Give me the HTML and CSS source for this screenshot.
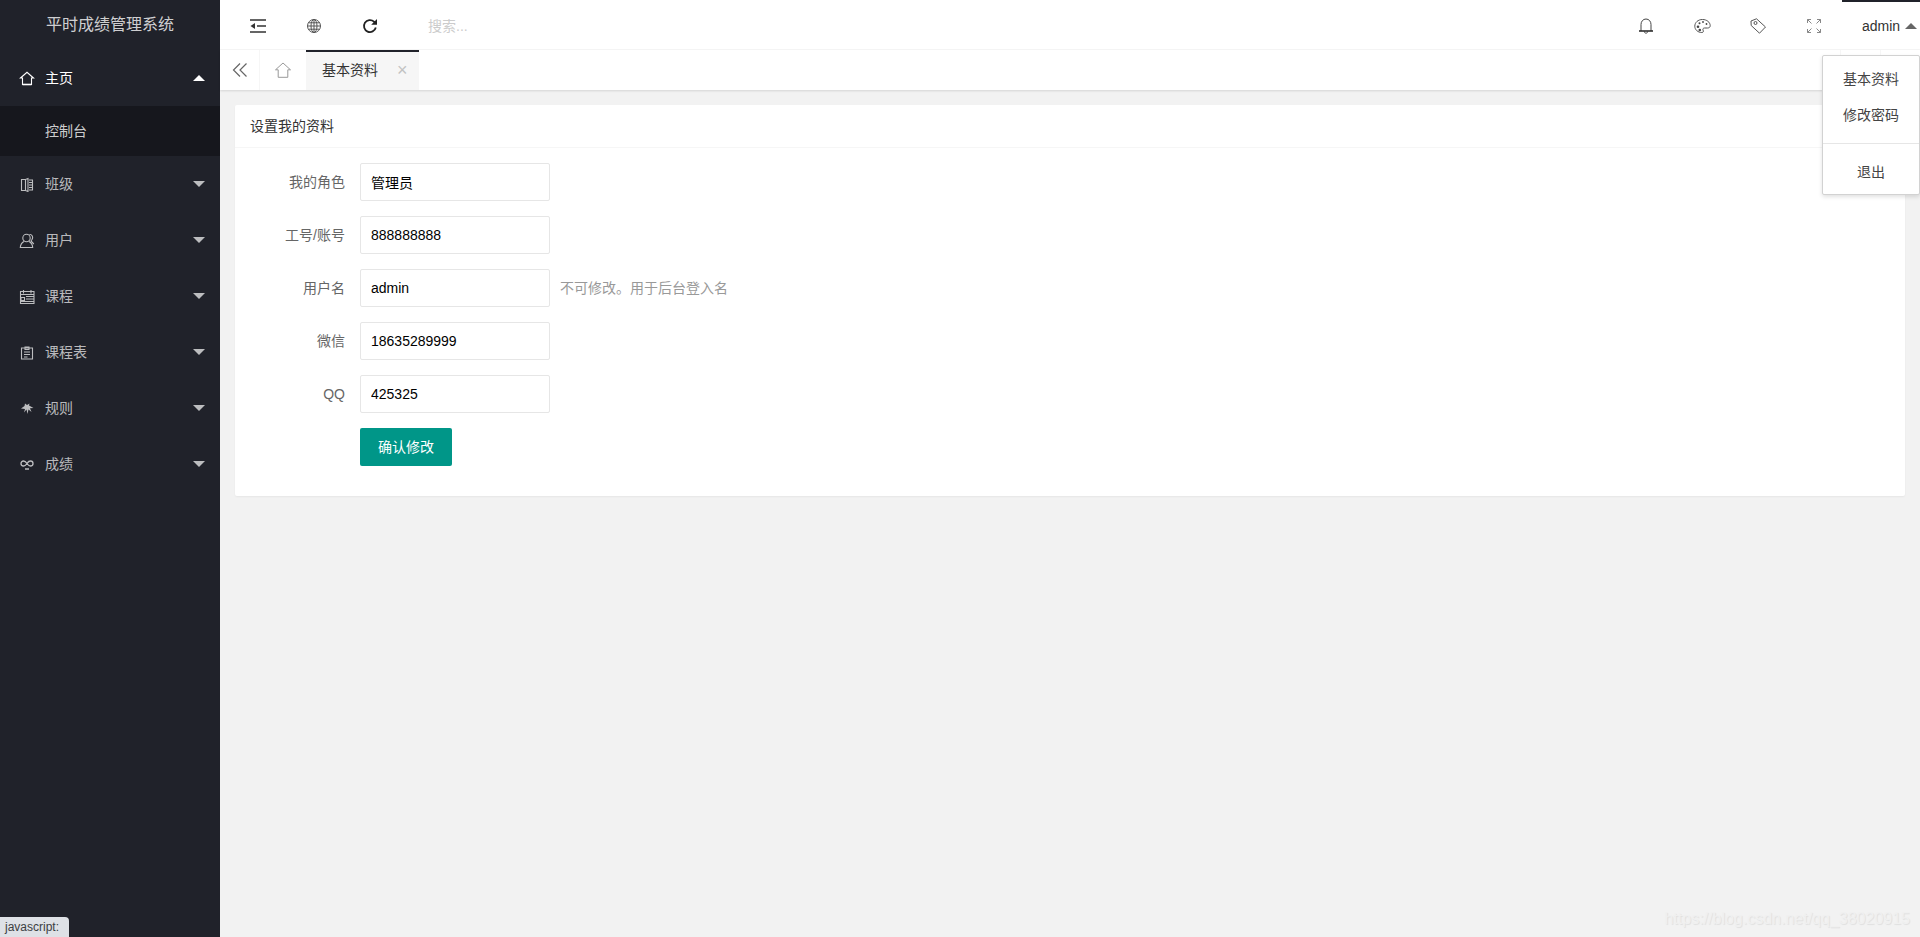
FILE: index.html
```html
<!DOCTYPE html>
<html lang="zh-CN">
<head>
<meta charset="utf-8">
<title>平时成绩管理系统</title>
<link rel="stylesheet" href="styles.css">
</head>
<body>
<div class="app">
  <aside class="side">
    <div class="logo">平时成绩管理系统</div>
    <nav>
      <div class="nav-item active">
        <svg class="nav-icon" viewBox="0 0 16 16"><path d="M1.500 8 8 2.300 14.500 8h-2v6.500h-9V8z"/><path class="bar" d="M3.500 14.500h9"/></svg>
        <span class="nav-label">主页</span><i class="caret up"></i>
      </div>
      <div class="sub">控制台</div>
      <div class="nav-item">
        <svg class="nav-icon" viewBox="0 0 16 16"><path d="M2.500 3.500h4v11h-4zM6.500 3.500 9 2.500v13l-2.500-1M10 4h4M10 6.500h4M10 9h4M10 11.500h4M10 14h4M13.500 4v10"/></svg>
        <span class="nav-label">班级</span><i class="caret"></i>
      </div>
      <div class="nav-item">
        <svg class="nav-icon" viewBox="0 0 16 16"><circle cx="7.500" cy="6" r="3.700"/><path d="M5 9.500c-2 1-3.500 3-3.700 6h12.400c-.2-3-1.700-5-3.700-6M10.500 2.600c2.500-.4 4 2.500 2.500 4.900l-1 1.500 2.800 3"/></svg>
        <span class="nav-label">用户</span><i class="caret"></i>
      </div>
      <div class="nav-item">
        <svg class="nav-icon" viewBox="0 0 16 16"><path d="M1.500 3.500h13.500v12H1.500zM4.500 2v3.500M12 2v3.500M1.500 6.500h13.500M2 9.500h3.500v3H2zM7 8.500h7.500M7 11h7.500M2 13.500h12.500"/></svg>
        <span class="nav-label">课程</span><i class="caret"></i>
      </div>
      <div class="nav-item">
        <svg class="nav-icon" viewBox="0 0 16 16"><path d="M2.500 4h11v11h-11zM6 3h4v2.500H6zM5 8h6M5 10.500h6M5 13h3.500"/></svg>
        <span class="nav-label">课程表</span><i class="caret"></i>
      </div>
      <div class="nav-item">
        <svg class="nav-icon solid" viewBox="0 0 16 16"><path d="M2 8.500 5.500 6 6 3.500l2 1.500 2.500-1.500-.5 2 4.500 2.500-3.500.2 1.500 3.800-3-2.500L8.500 14 7.500 9.500 5 12.500 6 9z"/></svg>
        <span class="nav-label">规则</span><i class="caret"></i>
      </div>
      <div class="nav-item">
        <svg class="nav-icon thick" viewBox="0 0 16 16"><path d="M8 7.500C7 6 6 5 4.500 5a2.500 2.500 0 0 0 0 5C6 10 7 9 8 7.500S9.500 5 11.500 5a2.500 2.500 0 0 1 0 5C10 10 9 9 8 7.500zM6 13h4"/></svg>
        <span class="nav-label">成绩</span><i class="caret"></i>
      </div>
    </nav>
  </aside>

  <div class="main">
    <header class="top">
      <div class="top-group left">
        <span class="top-btn"><svg class="top-icon heavy" viewBox="0 0 16 16"><path d="M0 2h16M7 8h9M0 14h16"/><path class="fill" d="M5 5v6L0.500 8z"/></svg></span>
        <span class="top-btn"><svg class="top-icon globe" viewBox="0 0 16 16"><circle cx="8" cy="8" r="6.500"/><ellipse cx="8" cy="8" rx="3" ry="6.500"/><path d="M8 1.500v13M1.500 8h13M2.500 4.800h11M2.500 11.200h11"/></svg></span>
        <span class="top-btn"><svg class="top-icon refresh" viewBox="0 0 16 16"><path d="M13.800 9.500A6 6 0 1 1 12 3.600l1.700 1.900"/><path class="fill" d="M15 1v5.800H9.200z"/></svg></span>
        <span class="search">搜索...</span>
      </div>
      <div class="top-group">
        <span class="top-btn"><svg class="top-icon dark" viewBox="0 0 16 16"><path d="M3 13V6.500C3 3.500 5 1 8 1s5 2.500 5 5.500V13M6.300 13.500c0 2.200 3.400 2.200 3.400 0"/><path class="line" d="M1 13h14"/></svg></span>
        <span class="top-btn"><svg class="top-icon wide" viewBox="0 0 17 16"><path d="M8.500 1.500C4 1.500.8 4.500.8 8.200c0 3.500 3 6.300 7 6.300 1.800 0 1.800-1.300 1.300-2.300-.6-1.100.1-2.200 1.400-2.200h3c1.700 0 2.700-.9 2.700-2.300 0-3.500-3.500-6.200-7.700-6.200z"/><g class="fill"><circle cx="4" cy="8.700" r="1.300"/><circle cx="5.500" cy="5.300" r="1"/><circle cx="9" cy="4" r=".9"/><circle cx="12.500" cy="6" r=".9"/><circle cx="5.800" cy="12" r="1.300"/></g></svg></span>
        <span class="top-btn"><svg class="top-icon" viewBox="0 0 16 16"><path d="M1 3 6.500.8l9 8.200-6 6.200L1.200 7.500z"/><circle cx="5.500" cy="5" r="1.500"/></svg></span>
        <span class="top-btn"><svg class="top-icon soft" viewBox="0 0 16 16"><path d="M1.500 5V1.500H5M1.500 1.500l4 4M11 1.500h3.500V5M14.500 1.500l-4 4M14.500 11v3.500H11M14.500 14.500l-4-4M5 14.500H1.500V11M1.500 14.500l4-4"/></svg></span>
        <span class="user">admin<i class="user-caret"></i></span>
      </div>
    </header>

    <div class="tabs">
      <span class="tab-arrow"><svg class="tab-icon" viewBox="0 0 16 16"><path d="M8 1.500 1.500 8 8 14.500M14.500 1.500 8 8l6.500 6.500"/></svg></span>
      <span class="tab-home"><svg class="tab-icon home" viewBox="0 0 16 16"><path d="M.5 7.800 8 1l7.500 6.800h-2.700v7.500H3.200V7.800z"/></svg></span>
      <span class="tab-active">基本资料<span class="tab-close">×</span></span>
      <span class="tab-spacer"></span>
      <span class="tab-edge"></span>
      <span class="tab-edge"></span>
    </div>

    <main class="content">
      <section class="card">
        <div class="card-head">设置我的资料</div>
        <form class="card-body">
          <div class="row"><label class="lab">我的角色</label><input class="field" value="管理员"></div>
          <div class="row"><label class="lab">工号/账号</label><input class="field" value="888888888"></div>
          <div class="row"><label class="lab">用户名</label><input class="field" value="admin"><span class="hint">不可修改。用于后台登入名</span></div>
          <div class="row"><label class="lab">微信</label><input class="field" value="18635289999"></div>
          <div class="row"><label class="lab">QQ</label><input class="field" value="425325"></div>
          <div class="row"><span class="lab"></span><button class="submit" type="button">确认修改</button></div>
        </form>
      </section>
    </main>
  </div>
</div>

<div class="menu">
  <div class="menu-item">基本资料</div>
  <div class="menu-item">修改密码</div>
  <div class="menu-line"></div>
  <div class="menu-item">退出</div>
</div>
<div class="user-bar"></div>
<div class="status">javascript:</div>
<div class="mark">https://blog.csdn.net/qq_38020915</div>
</body>
</html>
```
FILE: styles.css
```css
* { box-sizing: border-box; }
html, body { margin: 0; height: 100%; overflow: hidden; }
body {
  font: 14px/1.5 "Liberation Sans", "Noto Sans CJK SC", sans-serif;
  color: #333;
  background: #f2f2f2;
}
.app { display: flex; height: 937px; }

/* sidebar */
.side { flex: 0 0 220px; background: #20222a; }
.logo {
  height: 50px;
  line-height: 50px;
  text-align: center;
  font-size: 16px;
  color: rgba(255, 255, 255, .8);
}
.nav-item {
  display: flex;
  align-items: center;
  height: 56px;
  padding: 0 15px 0 19px;
  color: rgba(255, 255, 255, .7);
}
.nav-item.active { color: #fff; }
.nav-icon {
  flex: none;
  width: 16px;
  height: 16px;
  margin-right: 10px;
  fill: none;
  stroke: currentColor;
  stroke-width: 1.1;
}
.nav-icon .bar { stroke-width: 1.6; }
.nav-icon.solid { fill: currentColor; stroke: none; }
.nav-icon.thick { stroke-width: 1.3; }
.nav-label { flex: 1; }
.caret {
  width: 0;
  height: 0;
  border: 6px solid transparent;
  border-top-color: rgba(255, 255, 255, .7);
  border-bottom-width: 0;
}
.caret.up {
  border-top-width: 0;
  border-bottom: 6px solid #fff;
}
.sub {
  height: 50px;
  line-height: 50px;
  padding-left: 45px;
  background: rgba(0, 0, 0, .3);
  color: rgba(255, 255, 255, .8);
}

/* main column */
.main { flex: 1; min-width: 0; display: flex; flex-direction: column; }
.top {
  flex: none;
  display: flex;
  justify-content: space-between;
  height: 50px;
  background: #fff;
  border-bottom: 1px solid #f6f6f6;
}
.top-group { display: flex; align-items: center; padding-top: 3px; }
.top-group.left { padding-left: 10px; }
.top-btn {
  width: 56px;
  display: flex;
  justify-content: center;
}
.top-icon {
  width: 16px;
  height: 16px;
  fill: none;
  stroke: #555;
  stroke-width: 1;
}
.top-icon .fill { fill: #444; stroke: none; }
.top-icon.heavy { stroke: #333; stroke-width: 1.500; }
.top-icon.heavy .fill { fill: #333; }
.top-icon.refresh { stroke: #222; stroke-width: 1.800; }
.top-icon.refresh .fill { fill: #222; }
.top-icon.globe { stroke: #555; }
.top-icon.dark { stroke: #444; }
.top-icon.dark .line { stroke: #222; stroke-width: 1.500; }
.top-icon.wide { width: 17px; }
.top-icon.soft { stroke: #888; }
.search { margin-left: 30px; color: #ccc; }
.user {
  display: flex;
  align-items: center;
  width: 78px;
  padding-left: 20px;
  color: #333;
}
.user-caret {
  margin-left: 5px;
  border: 6px solid transparent;
  border-top-width: 0;
  border-bottom-color: #666;
}

/* tab strip */
.tabs {
  flex: none;
  display: flex;
  height: 40px;
  background: #fff;
  box-shadow: 0 1px 2px rgba(0, 0, 0, .12);
}
.tab-arrow, .tab-home {
  display: flex;
  align-items: center;
  justify-content: center;
  height: 40px;
}
.tab-arrow { width: 40px; border-right: 1px solid #f6f6f6; }
.tab-home { width: 46px; }
.tab-icon { width: 16px; height: 16px; fill: none; stroke: #666; stroke-width: 1.200; }
.tab-icon.home { stroke: #999; stroke-width: 1; }
.tab-active {
  display: flex;
  align-items: center;
  width: 113px;
  height: 40px;
  padding: 0 0 2px 16px;
  background: #f6f6f6;
  border-top: 2px solid #20222a;
  color: #333;
}
.tab-close { margin-left: 19px; font-size: 18px; line-height: 20px; color: #c2c2c2; }
.tab-spacer { flex: 1; }
.tab-edge { width: 40px; border-left: 1px solid #f6f6f6; }

/* content */
.content { flex: 1; padding: 15px; }
.card {
  background: #fff;
  border-radius: 2px;
  box-shadow: 0 1px 2px rgba(0, 0, 0, .05);
}
.card-head {
  height: 43px;
  line-height: 42px;
  padding: 0 15px;
  border-bottom: 1px solid #f6f6f6;
  color: #333;
}
.card-body { padding: 15px 0 30px; }
.row { display: flex; align-items: center; height: 38px; margin-bottom: 15px; }
.row:last-child { margin-bottom: 0; }
.lab {
  flex: none;
  width: 110px;
  text-align: right;
  color: #666;
}
.field {
  width: 190px;
  height: 38px;
  margin-left: 15px;
  padding: 0 0 0 10px;
  border: 1px solid #e6e6e6;
  border-radius: 2px;
  font: inherit;
  color: #000;
  background: #fff;
  outline: none;
}
.hint { margin-left: 10px; color: #999; }
.submit {
  width: 92px;
  height: 38px;
  margin-left: 15px;
  padding: 0;
  border: 0;
  border-radius: 2px;
  font: inherit;
  color: #fff;
  background: #009688;
}

/* overlays */
.menu {
  position: absolute;
  top: 55px;
  right: 0;
  width: 98px;
  height: 140px;
  padding: 5px 0;
  background: #fff;
  border: 1px solid #d2d2d2;
  border-radius: 2px;
  box-shadow: 0 2px 4px rgba(0, 0, 0, .12);
}
.menu-item { height: 36px; line-height: 36px; text-align: center; color: #444; }
.menu-line { height: 1px; margin: 10px 0 10px; background: #e6e6e6; }
.user-bar {
  position: absolute;
  top: 0;
  right: 0;
  width: 78px;
  height: 2px;
  background: #20222a;
}
.status {
  position: absolute;
  left: 0;
  bottom: 0;
  width: 69px;
  height: 20px;
  padding-left: 5px;
  line-height: 20px;
  font-size: 12px;
  background: #dee1e6;
  color: #3c4043;
  border-top-right-radius: 4px;
}
.mark {
  position: absolute;
  right: 10px;
  bottom: 9px;
  font-size: 16px;
  line-height: 18px;
  color: #f0f0f0;
  text-shadow: 1px 1px 1px rgba(0, 0, 0, .08);
}
```
